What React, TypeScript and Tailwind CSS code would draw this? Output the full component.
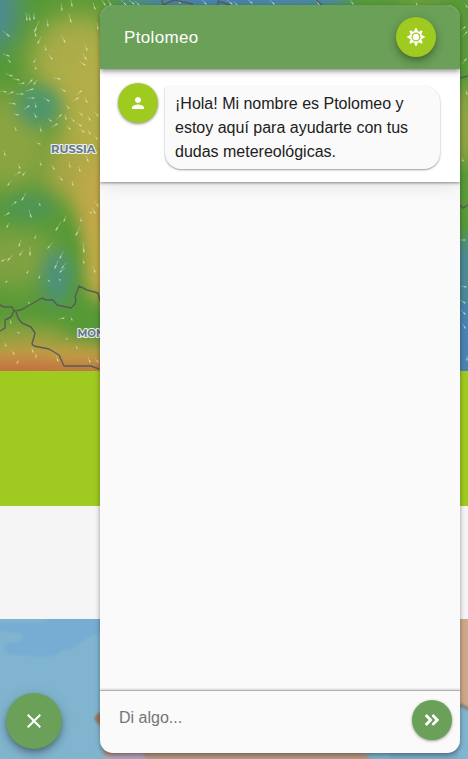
import { FaAngleDoubleRight, FaSun } from "react-icons/fa";
import { MdClose, MdPerson } from "react-icons/md";

type Blob = [number, number, number, number, string, number];

// cx, cy, rx, ry, colour, opacity
const heat: Blob[] = [
  [-6, 8, 24, 42, "#4a87b0", 0.8],
  [78, 62, 48, 48, "#aaad49", 1],
  [94, 130, 34, 80, "#b4ae48", 1],
  [74, 170, 34, 32, "#b1a847", 0.85],
  [97, 205, 20, 45, "#c0a848", 1],
  [101, 262, 17, 40, "#c2ab48", 1],
  [8, 142, 42, 50, "#8aa441", 1],
  [14, 258, 44, 30, "#86a343", 0.9],
  [38, 106, 22, 20, "#4b9573", 0.9],
  [30, 207, 26, 14, "#4b9562", 0.7],
  [57, 277, 15, 28, "#4b9180", 0.9],
  [20, 335, 50, 12, "#94a342", 0.8],
  [40, 360, 90, 20, "#c0a045", 1],
  [20, 376, 70, 16, "#c46f42", 1],
  [100, 377, 34, 14, "#c27543", 1],
  [215, 0, 80, 14, "#4580b4", 1],
  [300, 0, 50, 14, "#4a86a6", 1],
  [140, 0, 25, 9, "#4b8a8e", 1],
  [420, 0, 25, 10, "#6c9e3c", 1],
  [464, 125, 9, 42, "#a3a847", 1],
  [464, 290, 20, 54, "#4c8995", 1],
  [464, 355, 20, 55, "#4a82b5", 1],
];

// x, y, dx, dy
const wind: number[][] = [
  [26, 13, 1, 7], [34, 13, 0, 6], [29, 14, 1, 6], [47, 20, 1, 6], [39, 21, -4, 10],
  [69, 14, 2, 8], [61, 4, 1, 6], [71, 0, 1, 6], [93, 3, 2, 6], [3, 31, 6, 5],
  [62, 36, 3, 6], [41, 37, -3, 6], [34, 30, 2, 6], [85, 45, 2, 5], [97, 23, 1, 6],
  [45, 46, 1, 4], [49, 55, 3, 4], [36, 59, -2, 3], [3, 54, 6, 2], [8, 59, 2, 3],
  [83, 54, 3, 5], [80, 62, 5, 3], [35, 66, 1, 3], [6, 74, 6, 2], [14, 79, 5, 1],
  [19, 84, 5, -1], [27, 85, 5, -5], [37, 80, -3, 4], [54, 78, 6, 1], [61, 89, 4, 2],
  [1, 91, 5, 1], [8, 94, 5, -2], [16, 94, 7, 0], [26, 91, 7, -2], [28, 98, 6, 0],
  [44, 98, 5, 3], [9, 103, 6, 1], [24, 109, 5, -3], [35, 103, 1, 4], [66, 105, 3, 3],
  [77, 95, 4, -4], [73, 101, 5, -3], [85, 98, 2, 4], [14, 114, 4, 1], [34, 113, 2, 4],
  [48, 118, 3, 3], [57, 119, 4, -4], [65, 115, 1, 4], [71, 118, 3, 3], [79, 112, 3, 3],
  [88, 116, 2, 4], [95, 112, 3, 4], [40, 127, 1, 4], [52, 127, 5, -3], [67, 126, 3, 3],
  [77, 123, 4, 3], [80, 129, 4, 3], [88, 130, 2, 4], [15, 127, 1, 3], [37, 143, 3, 1],
  [4, 151, 1, 4], [95, 136, 2, 3], [18, 164, 2, 4], [40, 162, 1, 3], [52, 165, 2, 4],
  [69, 162, 1, 5], [86, 156, 2, 5], [79, 167, 1, 4], [26, 171, -3, 4], [11, 181, -3, 4],
  [15, 175, 5, -3], [59, 176, 3, 4], [72, 181, 1, 4], [26, 193, -4, 7], [12, 205, 4, -3],
  [4, 216, 5, -3], [9, 223, -2, 4], [29, 210, 2, 7], [39, 203, 1, 2], [92, 208, 3, 5],
  [95, 202, 3, 4], [89, 211, 2, 2], [66, 216, -2, 5], [61, 222, -5, 8], [80, 227, -4, 8],
  [83, 243, 1, 9], [81, 218, 0, 3], [21, 240, -2, 6], [36, 235, -1, 3], [30, 247, 0, 8],
  [52, 243, -4, 5], [13, 255, -5, 5], [6, 259, -4, 2], [23, 250, -3, 5], [63, 252, -3, 6],
  [58, 261, -3, 7], [66, 263, -4, 5], [65, 268, -5, 4], [83, 260, 1, 3], [93, 267, 2, 5],
  [29, 270, -2, 3], [40, 275, -1, 3], [8, 281, -2, 1], [48, 280, 1, 1], [59, 279, 1, 1],
  [28, 302, 1, 1], [59, 319, 5, -1], [71, 317, 1, 3], [10, 320, 1, 3], [5, 343, 1, 3],
  [12, 350, 2, 4], [32, 348, 1, 4], [19, 360, -2, 3], [36, 354, 0, 3], [56, 356, 2, 5],
  [76, 346, 1, 2], [88, 357, 2, 5], [95, 358, 3, 4], [17, 332, 2, 1], [66, 338, 1, 1],
  [102, 0, 3, 5], [108, 0, 3, 5], [121, 0, 5, 5], [129, 0, 5, 4], [135, 1, 4, 4],
  [178, 0, 2, 3], [202, 0, 4, 4], [227, 0, 5, 4], [234, 2, 3, 3], [248, 0, 4, 3],
  [270, 0, 4, 4], [315, 0, 4, 4], [350, 0, 3, 4], [416, 2, 1, 3],
  [465, 4, 2, 3], [461, 30, 4, -3], [463, 36, 4, -4], [462, 64, 4, -5], [466, 90, 1, 4],
  [462, 158, 1, 3], [460, 240, 5, 0], [461, 286, 5, 1], [460, 300, 5, 3], [461, 310, 4, 4],
  [463, 324, 2, 4], [467, 356, 0, 4],
];

function WindMap() {
  return (
    <svg className="block h-[371px] w-full" viewBox="0 0 468 371" preserveAspectRatio="none">
      <defs>
        <filter id="soft" x="-100%" y="-100%" width="300%" height="300%" colorInterpolationFilters="sRGB">
          <feGaussianBlur stdDeviation="13" />
        </filter>
        <filter id="edge" x="-100%" y="-150%" width="300%" height="400%" colorInterpolationFilters="sRGB">
          <feGaussianBlur stdDeviation="8" />
        </filter>
      </defs>
      <rect width="468" height="371" fill="#579a37" />
      {heat.map(([cx, cy, rx, ry, fill, opacity], i) => (
        <ellipse key={i} cx={cx} cy={cy} rx={rx} ry={ry} fill={fill} opacity={opacity} filter={ry < 24 || rx < 21 ? "url(#edge)" : "url(#soft)"} />
      ))}
      <g stroke="#eef4d8" strokeLinecap="round">
        {wind.map(([x, y, dx, dy], i) => (
          <g key={i}>
            <path d={`M${x} ${y}l${dx} ${dy}`} strokeWidth="0.9" opacity="0.32" />
            <path d={`M${x + dx * 0.7} ${y + dy * 0.7}l${dx * 0.3} ${dy * 0.3}`} strokeWidth="1.2" opacity="0.6" />
          </g>
        ))}
      </g>
      <g fill="none" stroke="#575c57" strokeWidth="1.4" strokeLinejoin="round">
        <path d="M0 305l4 2h8l2 4 7-1 21-12 4 2h7l4 5 14 3 4-4 1-5-1-2 4-11 8 4 11 3 2 8" />
        <path d="M14 311l-3 6-6 3v8l-5 3M16 312l2 6 4 5 9 4 4 6-3 11 2 2 15 3 10 6 5 11h27l8 3" />
        <path d="M163 5l-1-5M163 5l11-5 19 4M218 5v-4l12 4M316 0l6 5M460 205l3 3 5-3M460 78l8-2" />
      </g>
      <g fill="#65788d" stroke="#edf0e6" strokeWidth="2.2" strokeLinejoin="round" paintOrder="stroke" className="font-['Montserrat','Open_Sans',sans-serif] font-bold">
        <text x="51" y="152.5" fontSize="10.5" textLength="44.5" lengthAdjust="spacingAndGlyphs">RUSSIA</text>
        <text x="77.5" y="337" fontSize="10.5" textLength="61" lengthAdjust="spacingAndGlyphs">MONGOLIA</text>
      </g>
    </svg>
  );
}

function CoastMap() {
  return (
    <svg className="block h-[140px] w-full" viewBox="0 0 468 140" preserveAspectRatio="none">
      <defs>
        <filter id="coast" x="-20%" y="-20%" width="140%" height="140%" colorInterpolationFilters="sRGB">
          <feGaussianBlur stdDeviation="1.1" />
        </filter>
      </defs>
      <rect width="468" height="140" fill="#81b5cf" />
      <g filter="url(#coast)">
        <path d="M-5-5H110V12Q91 15 81 24L71 30 61 32 54 37 35 38 25 36H10L3 29 6 24 18 23 23 19 20 15 0 12Z" fill="#77add3" />
        <path d="M0 3H45L48-2H0Z" fill="#80b5cf" />
        <path d="M105 91l-7 3-4 5 3 5 8 6Z" fill="#967763" />
        <path d="M102 132l10-3 250 2 10 10H108Z" fill="#b99985" />
        <path d="M98 112l5 2 3 9-2 8-7-5Z" fill="#85bdd2" />
        <path d="M106 137l14-2 22-1 8 9h-43Z" fill="#b4a3bf" />
        <path d="M390 128h68v14h-68Z" fill="#79aecb" />
        <path d="M456-2H472V90L461 86 454 93Z" fill="#cda98b" />
        <path d="M454 90l7-4 11 6" fill="none" stroke="#807f7b" strokeWidth="3" />
      </g>
    </svg>
  );
}

function ChatPanel() {
  return (
    <section className="flex h-[748px] w-[360px] flex-col overflow-hidden rounded-[13px] bg-[#fafafa] shadow-[0_2px_5px_rgba(0,0,0,0.4)]">
      <header className="relative z-10 flex h-16 shrink-0 items-center justify-between bg-[#6aa057] px-6 shadow-[0_2px_4px_-1px_rgba(0,0,0,0.3),0_3px_6px_rgba(0,0,0,0.25)]">
        <h1 className="pt-0.5 text-[17px] leading-6 tracking-[0.34px] text-white">Ptolomeo</h1>
        <button aria-label="Tema" className="flex size-10 items-center justify-center rounded-full bg-[#9fca20] text-white shadow-[0_3px_5px_-1px_rgba(0,0,0,0.2),0_6px_10px_rgba(0,0,0,0.14),0_1px_12px_rgba(0,0,0,0.12)]">
          <FaSun size={18} />
        </button>
      </header>
      <div className="flex h-[113px] shrink-0 items-start bg-white pl-[18px] pt-[14px] shadow-[0_1px_3px_rgba(0,0,0,0.45),0_8px_16px_rgba(0,0,0,0.06)]">
        <span className="flex size-10 shrink-0 items-center justify-center rounded-full bg-[#9fca20] text-white shadow-[0_1px_3px_rgba(0,0,0,0.45)]">
          <MdPerson size={18} />
        </span>
        <p className="ml-[7px] mt-[3px] h-[83px] w-[275px] rounded-[3px_16px_16px_16px] bg-[#fafafa] pl-[10px] pt-[6px] text-base leading-6 text-[#212121] shadow-[0_1px_2px_rgba(0,0,0,0.4)]">
          ¡Hola! Mi nombre es Ptolomeo y<br />estoy aquí para ayudarte con tus<br />dudas metereológicas.
        </p>
      </div>
      <div className="grow" />
      <form className="flex h-[63px] shrink-0 items-start justify-between border-t border-[#b2b2b2] pl-[19px] pr-2 pt-[9px] shadow-[0_-1px_2px_rgba(0,0,0,0.15)]">
        <input aria-label="Mensaje" placeholder="Di algo..." className="h-9 w-[270px] bg-transparent text-base text-[#212121] outline-none placeholder:text-[#757575]" />
        <button type="button" aria-label="Enviar" className="flex size-10 items-center justify-center rounded-full bg-[#6aa057] text-white shadow-[0_1px_3px_rgba(0,0,0,0.4)]">
          <FaAngleDoubleRight size={18} />
        </button>
      </form>
    </section>
  );
}

export default function App() {
  return (
    <main className="relative h-[759px] w-[468px] overflow-hidden bg-[#f5f5f5] font-['Liberation_Sans',Arial,sans-serif]">
      <WindMap />
      <div className="h-[135px] bg-[#9fca20]" />
      <div className="h-[113px] bg-[#f5f5f5]" />
      <CoastMap />
      <div className="absolute left-[100px] top-[5px]">
        <ChatPanel />
      </div>
      <button aria-label="Cerrar" className="absolute left-[6px] top-[693px] flex size-14 items-center justify-center rounded-full bg-[#6aa057] text-white shadow-[0_3px_5px_-1px_rgba(0,0,0,0.25),0_6px_10px_rgba(0,0,0,0.16),0_1px_14px_rgba(0,0,0,0.12)]">
        <MdClose size={24} />
      </button>
    </main>
  );
}
